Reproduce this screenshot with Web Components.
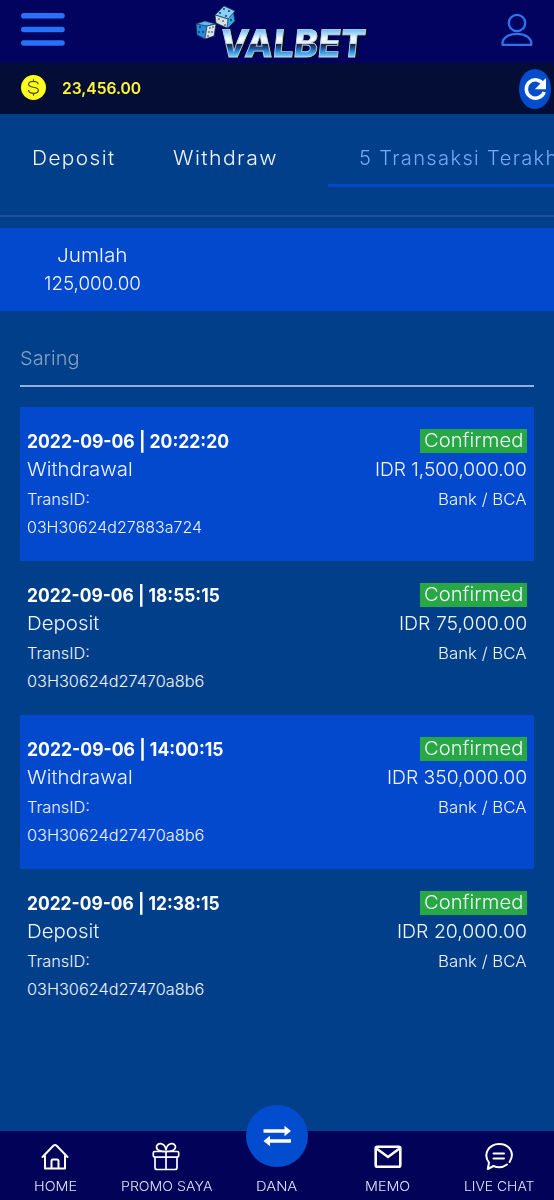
<!DOCTYPE html>
<html lang="id">
<head>
<meta charset="utf-8">
<title>Valbet</title>
<style>
html,body{margin:0;height:100%}
body{background:#013f8a;font-family:Inter,"Open Sans",sans-serif;color:#f0f5ff;overflow:hidden}
</style>
</head>
<body>
<valbet-app></valbet-app>
<script>
const define = (name, html, init) => {
  const t = document.createElement('template');
  t.innerHTML = html;
  customElements.define(name, class extends HTMLElement {
    connectedCallback() {
      if (this.shadowRoot) return;
      this.attachShadow({mode:'open'}).append(t.content.cloneNode(true));
      if (init) init.call(this, this.shadowRoot);
    }
  });
};

/* A single line of text stretched to the given width. */
define('fit-text', `<style>
:host{display:block;white-space:nowrap;font-size:19px;font-weight:300;line-height:28.4px}
span{display:inline-block;transform-origin:0 50%;letter-spacing:var(--track,0)}
</style><span><slot></slot></span>`, function (r) {
  const w = +this.getAttribute('w'), s = r.querySelector('span');
  this.style.width = w + 'px';
  const track = parseFloat(getComputedStyle(s).letterSpacing) || 0;
  s.style.transform = `scaleX(${(w / (s.offsetWidth - track)).toFixed(4)})`;
});

define('valbet-logo', `<style>:host{display:block;width:180px;height:61px}svg{display:block;overflow:visible}.w{filter:drop-shadow(2px 1.500px 0 #080b25)}</style>
<svg width="180" height="61" viewBox="0 0 180 61">
<defs><linearGradient id="g" gradientUnits="userSpaceOnUse" x1="0" y1="-28" x2="0" y2="0">
<stop offset="0" stop-color="#58b4ee"/><stop offset=".36" stop-color="#f4fbff"/><stop offset=".53" stop-color="#e3edf6"/><stop offset=".57" stop-color="#1a2744"/><stop offset=".7" stop-color="#234f91"/><stop offset=".8" stop-color="#2388da"/><stop offset="1" stop-color="#79c9f4"/></linearGradient></defs>
<g stroke="#0a2c55" stroke-width=".7" stroke-linejoin="round">
<path d="M1 22 10 19 19 22 18 33 10 37 2 33z" fill="#278bd9"/><path d="M1 22 10 19 21 22 12 24z" fill="#61b9ed"/><path d="M12 24 21 22 19 34 10 37z" fill="#dce4e9"/>
<path d="M29 4 38 8 40 19 33 26 23 21 20 13z" fill="#3aa3df"/><path d="M29 4 40 9 33 17 20 13z" fill="#87d1f6"/><path d="M20 13 33 17 32 26 21 21z" fill="#d7dfe4"/></g>
<g fill="#102a47"><circle cx="5" cy="25" r=".9"/><circle cx="8" cy="30" r=".9"/><circle cx="4" cy="30" r=".9"/><circle cx="15" cy="26" r=".8"/><circle cx="18" cy="25" r=".8"/><circle cx="14" cy="30" r=".8"/><circle cx="17" cy="30" r=".8"/><circle cx="13" cy="34" r=".8"/><circle cx="29" cy="7" r=".9"/><circle cx="25" cy="11" r=".9"/><circle cx="34" cy="9" r=".9"/><circle cx="31" cy="14" r=".9"/><circle cx="24" cy="17" r=".8"/><circle cx="28" cy="19" r=".8"/><circle cx="30" cy="23" r=".8"/><circle cx="36" cy="18" r=".9"/></g>
<g class="w"><text transform="translate(24 54.500) skewX(-6)" textLength="145" lengthAdjust="spacingAndGlyphs" font-family="Inter" font-weight="800" font-size="38" fill="url(#g)" stroke="#b9d3e8" stroke-width=".9">VALBET</text></g>
</svg>`);

define('top-bar', `<style>
:host{display:flex;height:63px;background:#02025f;justify-content:flex-start;align-items:flex-start;padding:0 21px 0 20px;box-sizing:border-box}
svg{display:block}valbet-logo{margin:2px 0 0 129px}.u{margin:13px 0 0 auto}.m{margin-top:12px}
</style>
<svg class="m" width="46" height="36" viewBox="0 0 46 36" stroke="#2672fa" stroke-width="5.6" stroke-linecap="round"><path d="M3.8 3.8h38.2M3.8 17.5h38.2M3.8 31h38.2"/></svg>
<valbet-logo></valbet-logo>
<svg class="u" width="32" height="34" viewBox="0 0 32 34" fill="none" stroke="#2f73ec" stroke-width="2.3"><circle cx="16" cy="10" r="8.2"/><path d="M1.500 31.800v-1.600c0-5.400 6.500-9.400 14.400-9.400s14.400 4 14.400 9.400v1.600z" stroke-linejoin="round"/></svg>`);

define('balance-bar', `<style>
:host{display:flex;align-items:center;height:51px;background:#040d36;padding:0 3px 2px 21px;box-sizing:border-box}
svg{display:block}fit-text{margin:1px 0 0 16px;font-size:16px;font-weight:600;color:#fff735;flex:none}.r{margin-left:auto;position:relative;top:1px}
</style>
<svg width="25" height="25" viewBox="0 0 25 25"><circle cx="12.5" cy="12.5" r="12.5" fill="#ffff1e"/><path d="M17 9.200c0-2-1.600-2.900-4.500-2.900S7.600 7.300 7.600 9.300c0 4.300 9.800 1.600 9.800 6 0 2-1.700 3-4.800 3s-5.100-1-5.100-3.200M12.500 4.200v2.100M12.500 18.400v2.300" fill="none" stroke="#4b4a12" stroke-width="1.200"/></svg>
<fit-text w="79">23,456.00</fit-text>
<svg class="r" width="32" height="40" viewBox="0 0 32 40"><ellipse cx="16" cy="20" rx="16" ry="20" fill="#024dcb"/><path d="M24.500 15.500A9.200 9.200 0 1 0 25.200 23" fill="none" stroke="#fff" stroke-width="3.500"/><path d="M27 9v11.200H15.800z" fill="#fff"/></svg>`);

define('tab-strip', `<style>
:host{display:flex;height:103px;border-bottom:2px solid #18509a;box-sizing:border-box;overflow:hidden;padding-left:32px;--track:1.3px}
fit-text{flex:none;margin-top:30px;font-size:19.500px}
.a{flex:none;margin-left:52px;height:73px;width:275px;border-bottom:3px solid #0249ce;box-sizing:border-box;padding-left:31px;color:#78a9f8}
</style><fit-text w="82">Deposit</fit-text><fit-text w="103" style="margin-left:59px">Withdraw</fit-text><div class="a"><fit-text w="213">5 Transaksi Terakhir</fit-text></div>`);

define('total-panel', `<style>
:host{display:flex;flex-direction:column;align-items:center;box-sizing:border-box;margin-top:11px;height:83px;padding:13.500px 370px 0 0;background:#0249ce}
</style><fit-text w="71">Jumlah</fit-text><fit-text w="97">125,000.00</fit-text>`);

define('filter-field', `<style>
:host{display:block;margin:33px 20px 0;height:41px;border-bottom:2px solid #8fb0d8;color:#84a2c6}
fit-text{padding-top:1px}
</style><fit-text w="60"><slot></slot></fit-text>`);

define('transaction-card', `<style>
:host{display:grid;grid-template-columns:1fr auto;box-sizing:border-box;height:154px;padding:21px 7px 0;align-content:start}
:host([tone="bright"]){background:#0249ce}
fit-text{line-height:28px}
.right{display:flex;flex-direction:column;align-items:flex-end}
.date{font-weight:700;color:#fff}.small{font-size:16.300px}
.kind,.amount{margin-bottom:1px}
.status{background:#27a844;height:24px;padding:0 4px;margin:1px 0 3px}
.status fit-text{line-height:24px}
</style>
<div><fit-text class="date"></fit-text><fit-text class="kind"></fit-text><fit-text class="small" w="63">TransID:</fit-text><fit-text class="small id"></fit-text></div>
<div class="right"><div class="status"><fit-text w="99">Confirmed</fit-text></div><fit-text class="amount"></fit-text><fit-text class="small" w="89">Bank / BCA</fit-text></div>`, function (r) {
  for (const key of ['date', 'kind', 'id', 'amount']) {
    const [text, w] = this.getAttribute(key).split(';');
    const next = document.createElement('fit-text'), old = r.querySelector('.' + key);
    next.className = old.className; next.setAttribute('w', w); next.textContent = text;
    old.replaceWith(next);
  }
});

define('nav-item', `<style>
:host{display:flex;flex:1;flex-direction:column;align-items:center;padding-top:10px;color:#fff}
.i{height:31px;display:flex;align-items:center}
fit-text{font-size:13.700px;line-height:28px;color:#e0e5fb}
</style><div class="i"><slot name="icon"></slot></div><fit-text></fit-text>`, function (r) {
  const old = r.querySelector('fit-text'), next = document.createElement('fit-text');
  next.setAttribute('w', this.getAttribute('w'));
  next.textContent = this.textContent.trim();
  old.replaceWith(next);
});

define('bottom-nav', `<style>
:host{display:flex;height:69px;background:#020259;flex:none;position:relative}
svg{display:block;fill:none;stroke:#fff;stroke-width:1.700}
.fab{position:absolute;left:246px;top:-26px}
</style>
<nav-item w="43"><svg slot="icon" width="30" height="30" viewBox="0 0 30 30" style="stroke-width:2" stroke-linejoin="round" stroke-linecap="round"><path d="M2.500 15 13.300 3.800q1.700-1.500 3.400 0L27.500 15M5 13.500V26.500h20V13.500M11.500 26.500V19q0-1.500 1.500-1.500h4q1.500 0 1.500 1.500v7.500"/></svg>HOME</nav-item>
<nav-item w="91"><svg slot="icon" width="30" height="30" viewBox="0 0 30 30"><rect x="2.300" y="9.500" width="25.400" height="5.600" rx="1.500"/><path d="M4 15v10.500q0 2 2 2h18q2 0 2-2V15M15 9.500v18M15 9.500C12 9.500 5.500 9.300 5.500 5S13.500-.5 15 8M15 9.500c3 0 9.500-.2 9.500-4.500S16.500-.5 15 8"/></svg>PROMO SAYA</nav-item>
<nav-item w="41">DANA</nav-item>
<nav-item w="45"><svg slot="icon" width="30" height="30" viewBox="0 0 30 30" style="stroke-width:2.600"><rect x="2.700" y="4.800" width="24.600" height="20" rx="1.500"/><path d="M3.500 6.500 15 15 26.500 6.500"/></svg>MEMO</nav-item>
<nav-item w="70"><svg slot="icon" width="30" height="30" viewBox="0 0 30 30" style="stroke-width:2" stroke-linecap="round" stroke-linejoin="round"><path d="M25.600 20C31.500 10.500 25 2 15 2S-1.500 12 5 20.700L3.800 27l5.700-3c4.500 2 9.500 1.500 13.500-1.500M9.500 11.500h10.500M9.500 16.500h10.500"/></svg>LIVE CHAT</nav-item>
<svg class="fab" width="62" height="62" viewBox="0 0 62 62"><circle cx="31" cy="31" r="31" fill="#024ccf" style="fill:#024ccf;stroke:none"/><path d="M17.500 26h23M21 36h24" style="stroke-width:3.600"/><path d="M38.500 20.800v10.400L45 26zM24 30.800v10.400L17.500 36z" style="fill:#fff;stroke:none"/></svg>`);

define('valbet-app', `<style>
:host{display:flex;flex-direction:column;width:554px;height:1200px;overflow:hidden;background:#013f8a}
:host>*{flex:none}main{margin:20px 20px 0}bottom-nav{margin-top:auto}
</style>
<top-bar></top-bar><balance-bar></balance-bar><tab-strip></tab-strip><total-panel></total-panel>
<filter-field>Saring</filter-field>
<main>
<transaction-card tone="bright" date="2022-09-06 | 20:22:20;202" kind="Withdrawal;106" id="03H30624d27883a724;175" amount="IDR 1,500,000.00;152"></transaction-card>
<transaction-card date="2022-09-06 | 18:55:15;193" kind="Deposit;72" id="03H30624d27470a8b6;177" amount="IDR 75,000.00;128"></transaction-card>
<transaction-card tone="bright" date="2022-09-06 | 14:00:15;197" kind="Withdrawal;106" id="03H30624d27470a8b6;177" amount="IDR 350,000.00;140"></transaction-card>
<transaction-card date="2022-09-06 | 12:38:15;193" kind="Deposit;72" id="03H30624d27470a8b6;177" amount="IDR 20,000.00;130"></transaction-card>
</main><bottom-nav></bottom-nav>`);
</script>
</body>
</html>
